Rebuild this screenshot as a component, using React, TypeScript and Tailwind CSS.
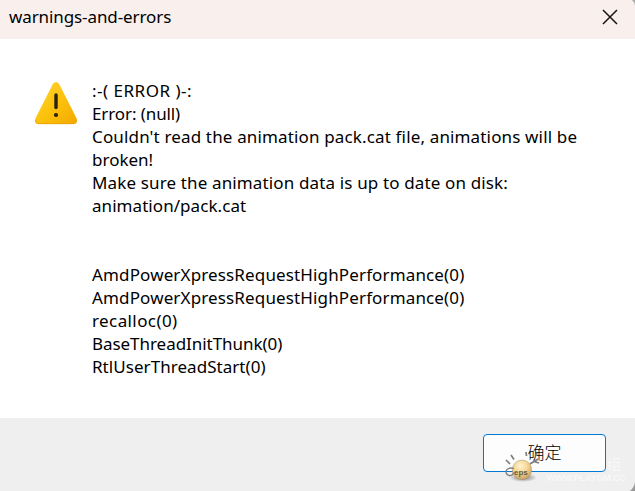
import React from 'react';

interface MessageLine {
    text: string;
    spacing: string;
}

const lines: MessageLine[] = [
    { text: ':-( ERROR )-:', spacing: 'tracking-[0.5px]' },
    { text: 'Error: (null)', spacing: 'tracking-[-0.1px]' },
    { text: "Couldn't read the animation pack.cat file, animations will be", spacing: 'tracking-[0.15px]' },
    { text: 'broken!', spacing: 'tracking-[0px]' },
    { text: 'Make sure the animation data is up to date on disk:', spacing: 'tracking-[0.14px]' },
    { text: 'animation/pack.cat', spacing: 'tracking-[0.06px]' },
    { text: '', spacing: 'tracking-[0px]' },
    { text: '', spacing: 'tracking-[0px]' },
    { text: 'AmdPowerXpressRequestHighPerformance(0)', spacing: 'tracking-[0.14px]' },
    { text: 'AmdPowerXpressRequestHighPerformance(0)', spacing: 'tracking-[0.14px]' },
    { text: 'recalloc(0)', spacing: 'tracking-[0.4px]' },
    { text: 'BaseThreadInitThunk(0)', spacing: 'tracking-[-0.05px]' },
    { text: 'RtlUserThreadStart(0)', spacing: 'tracking-[0.05px]' },
];

const WarningIcon: React.FC = () => (
    <svg className="h-[44px] w-[44px] shrink-0" viewBox="0 0 44 44">
        <defs>
            <linearGradient id="warn" x1="0" y1="0" x2="1" y2="1">
                <stop offset="0" stopColor="#ffd43a" />
                <stop offset="0.5" stopColor="#fcc30c" />
                <stop offset="1" stopColor="#f5a800" />
            </linearGradient>
        </defs>
        <path d="M18.7 2.2Q22 -2 25.3 2.2L42.6 36.5Q44.2 41.5 39.5 42H4.5Q-0.2 41.5 1.4 36.5Z" fill="url(#warn)" />
        <path d="M1.6 38Q1.5 41.5 4.5 41.7H39.5Q42.5 41.5 42.4 38" fill="none" stroke="#e99d08" strokeWidth="0.8" />
        <path d="M22 13V25.5" stroke="#29220b" strokeWidth="3.4" strokeLinecap="round" />
        <circle cx="22" cy="33" r="2.1" fill="#29220b" />
    </svg>
);

// Bomb mascot of the site stamp
const Mascot: React.FC = () => (
    <svg className="absolute left-[504px] top-[450px] h-[34px] w-[38px]" viewBox="0 0 38 34">
        <defs>
            <radialGradient id="ball" cx="0.42" cy="0.3" r="0.75">
                <stop offset="0" stopColor="#fff3d4" />
                <stop offset="0.5" stopColor="#f5d58f" />
                <stop offset="1" stopColor="#c49c5c" />
            </radialGradient>
            <radialGradient id="shade">
                <stop offset="0" stopColor="#555" stopOpacity="0.8" />
                <stop offset="1" stopColor="#555" stopOpacity="0" />
            </radialGradient>
        </defs>
        <ellipse cx="19" cy="27.5" rx="14" ry="4.5" fill="url(#shade)" />
        <path d="M2 10L6 14M7 5L10 9.5M22 2L22.5 6" fill="none" stroke="#7d7d7d" strokeWidth="1.7" />
        <path d="M26 14L30 11.5L35 13M30 11.5L34 9M33 3L32 6" fill="none" stroke="#7d7d7d" strokeWidth="1.7" />
        <circle cx="18" cy="19.8" r="9.7" fill="url(#ball)" stroke="#a58b62" strokeWidth="0.5" />
        <path d="M10 18.5Q5 17 2.5 20Q1 24 5 25.5Q9 26 9.5 22.5" fill="none" stroke="#7d7d7d" strokeWidth="1.3" />
        <text x="10" y="24.5" fontFamily="Liberation Sans, sans-serif" fontSize="8" fontWeight="700" fill="#635a43">eps</text>
    </svg>
);

const App: React.FC = () => {
    return (
        <div className="relative flex h-[491px] w-[635px] flex-col overflow-hidden bg-white font-['Noto_Sans','Noto_Sans_CJK_SC',sans-serif] text-black">
            <header className="flex h-[39px] shrink-0 items-center justify-between bg-[#f9f0ee] pb-[5px] pl-[9px] pr-[17px]">
                <h1 className="text-[17px] leading-6 tracking-[-0.1px]">warnings-and-errors</h1>
                <button aria-label="Close">
                    <svg className="block h-[16px] w-[16px]" viewBox="0 0 16 16">
                        <path d="M1 1L15 15M15 1L1 15" stroke="#181414" strokeWidth="1.5" />
                    </svg>
                </button>
            </header>

            <main className="flex flex-1 items-start pl-[34px] pt-[40px]">
                <div className="pt-[3px]">
                    <WarningIcon />
                </div>
                <div className="pl-[14px] text-[17px] leading-[23px]">
                    {lines.map((line, i) => (
                        <p key={i} className={`h-[23px] whitespace-pre ${line.spacing}`}>{line.text}</p>
                    ))}
                </div>
            </main>

            <footer className="flex h-[73px] shrink-0 items-start justify-end bg-[#efefef] pr-[29px] pt-[16px]">
                <button className="h-[38px] w-[123px] rounded-[4px] border border-[#0078d4] bg-[#fdfdfd] pb-[2px] font-['Noto_Sans_CJK_SC',sans-serif] text-[17px] font-light leading-[34px]">确定</button>
            </footer>

            {/* Site stamp over the footer */}
            <Mascot />
            <div className="absolute left-[547px] top-[473px] whitespace-nowrap font-['Liberation_Sans',sans-serif] text-[9px] font-bold leading-[10px] tracking-[-0.15px] text-[#f8f8f8]">WWW.PLAYGM.CC</div>
            <div className="absolute left-[607px] top-[454px] font-['Noto_Sans_CJK_SC',sans-serif] text-[14px] leading-[18px] text-[#f8f8f8]">组</div>
            <svg className="absolute bottom-0 right-0 h-[9px] w-[5px]" viewBox="0 0 5 9">
                <path d="M5 0V9H0Q4 6 5 0Z" fill="#999" />
            </svg>
            <svg className="absolute right-0 top-0 h-[6px] w-[3px]" viewBox="0 0 3 6">
                <path d="M0 0H3V6Q2.5 2 0 0Z" fill="#aaa" />
            </svg>
        </div>
    );
};

export default App;
